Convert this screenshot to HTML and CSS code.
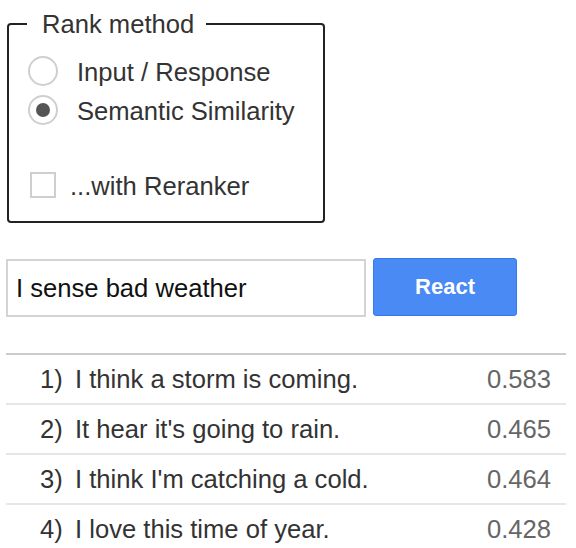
FILE: index.html
```html
<!DOCTYPE html>
<html>
<head>
<meta charset="utf-8">
<link rel="stylesheet" href="styles.css">
</head>
<body>
<div class="page">
  <fieldset class="rank">
    <legend class="rank-legend">Rank method</legend>
    <label class="opt">
      <input type="radio" name="m" class="radio">
      <span class="opt-label">Input / Response</span>
    </label>
    <label class="opt">
      <input type="radio" name="m" class="radio" checked>
      <span class="opt-label">Semantic Similarity</span>
    </label>
    <label class="opt opt-check">
      <input type="checkbox" class="check">
      <span class="opt-label check-label">...with Reranker</span>
    </label>
  </fieldset>

  <div class="query">
    <input class="query-input" type="text" value="I sense bad weather">
    <button class="react-btn">React</button>
  </div>

  <ul class="results">
    <li class="row"><span class="num">1)</span><span class="txt">I think a storm is coming.</span><span class="score">0.583</span></li>
    <li class="row"><span class="num">2)</span><span class="txt">It hear it's going to rain.</span><span class="score">0.465</span></li>
    <li class="row"><span class="num">3)</span><span class="txt">I think I'm catching a cold.</span><span class="score">0.464</span></li>
    <li class="row"><span class="num">4)</span><span class="txt">I love this time of year.</span><span class="score">0.428</span></li>
  </ul>
</div>
</body>
</html>
```
FILE: styles.css
```css
html, body {
  margin: 0;
  padding: 0;
  background: #fff;
}
body {
  font-family: "Liberation Sans", Arial, sans-serif;
  font-size: 25.6px;
  color: #333;
}
.page {
  padding: 10px 10px 0 6px;
}
.rank {
  box-sizing: border-box;
  width: 318px;
  margin: 0 0 0 1px;
  border: 2px solid #222;
  border-radius: 4px;
  padding: 0 0 15px 18px;
}
.rank-legend {
  padding: 0 12px 0 15px;
  line-height: 28px;
  color: #333;
}
.opt {
  display: flex;
  align-items: flex-start;
  height: 39px;
  line-height: 39px;
}
.opt:first-of-type {
  margin-top: 15px;
}
.opt-check {
  margin-top: 36px;
}
.radio {
  appearance: none;
  -webkit-appearance: none;
  box-sizing: border-box;
  width: 30px;
  height: 30px;
  margin: 3px 19px 0 1px;
  border: 2px solid #cfcfcf;
  border-radius: 50%;
  background: #fff;
  display: flex;
  align-items: center;
  justify-content: center;
}
.radio:checked::after {
  content: "";
  width: 14px;
  height: 14px;
  border-radius: 50%;
  background: #555;
}
.check {
  appearance: none;
  -webkit-appearance: none;
  box-sizing: border-box;
  width: 26px;
  height: 26px;
  margin: 5px 14px 0 3px;
  border: 2px solid #cfcfcf;
  background: #fff;
}
.opt-label {
  color: #333;
}
.query {
  display: flex;
  align-items: flex-start;
  gap: 7px;
  margin-top: 35px;
}
.query-input {
  box-sizing: border-box;
  width: 360px;
  height: 58px;
  margin: 1px 0 0 0;
  padding: 0 8px;
  border: 2px solid #d4d4d4;
  font-family: "Liberation Sans", Arial, sans-serif;
  font-size: 25.6px;
  color: #111;
  outline: none;
}
.react-btn {
  box-sizing: border-box;
  width: 144px;
  height: 58px;
  border: 1px solid #3579ec;
  border-radius: 3px;
  background: #4a8af5;
  color: #fff;
  font-family: "Liberation Sans", Arial, sans-serif;
  font-weight: bold;
  font-size: 22px;
}
.results {
  list-style: none;
  margin: 36px 0 0 0;
  padding: 0;
  width: 560px;
  border-top: 2px solid #cccccc;
}
.row {
  display: flex;
  align-items: center;
  height: 48px;
  border-bottom: 2px solid #e6e6e6;
  padding: 0 15px 0 34px;
}
.num {
  width: 35px;
  color: #333;
}
.txt {
  flex: 1;
  color: #333;
}
.score {
  color: #666;
}
```
